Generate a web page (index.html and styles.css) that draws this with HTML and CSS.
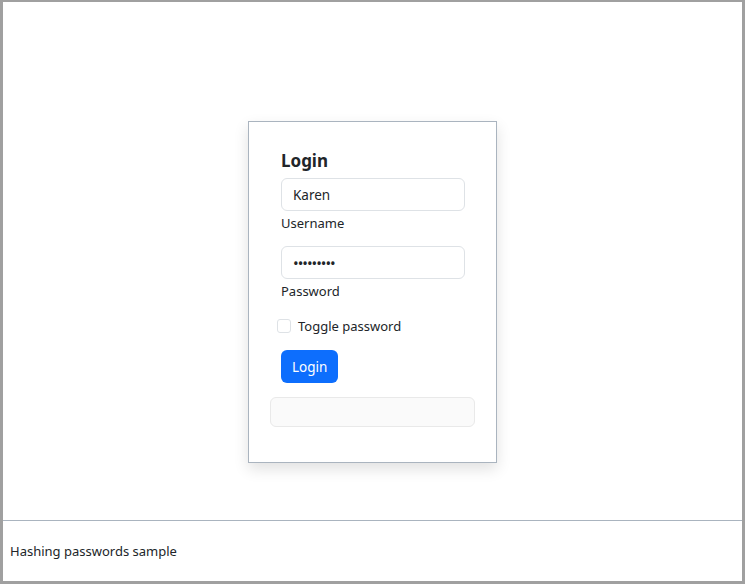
FILE: index.html
```html
<!DOCTYPE html>
<html>
<head>
<meta charset="utf-8">
<link rel="stylesheet" href="styles.css">
</head>
<body>
<div class="frame">
  <main class="main">
    <div class="card">
      <form class="form">
        <h3 class="title">Login</h3>
        <input class="control" type="text" value="Karen">
        <label class="label">Username</label>
        <input class="control control-2" type="password" value="secretpw1">
        <label class="label">Password</label>
        <div class="check">
          <span class="box"></span>
          <span class="check-label">Toggle password</span>
        </div>
        <button type="button" class="btn">Login</button>
      </form>
      <div class="message"></div>
    </div>
  </main>
  <footer class="footer">Hashing passwords sample</footer>
</div>
</body>
</html>
```
FILE: styles.css
```css
html, body {
  margin: 0;
  padding: 0;
  background: #ffffff;
}
body {
  font-family: "Noto Sans", "Open Sans", sans-serif;
  font-size: 13px;
  color: #212529;
}
.frame {
  box-sizing: border-box;
  width: 745px;
  height: 584px;
  border: 3px solid #a0a0a0;
  border-top-width: 2px;
  display: flex;
  flex-direction: column;
}
.main {
  height: 518px;
  flex: none;
  display: flex;
  justify-content: center;
  align-items: flex-start;
  border-bottom: 1px solid #aab4bf;
}
.card {
  box-sizing: border-box;
  width: 249px;
  height: 342px;
  margin-top: 119px;
  border: 1px solid #aab4bf;
  background: #fff;
  box-shadow: 0 6px 14px rgba(0,0,0,0.12);
  padding: 24px 21px 0 21px;
}
.form {
  display: flex;
  flex-direction: column;
  align-items: flex-start;
  padding: 0 11px;
}
.title {
  margin: 0;
  font-size: 17px;
  font-weight: 700;
  line-height: 30px;
  color: #212529;
}
.control {
  box-sizing: border-box;
  width: 184px;
  height: 33px;
  margin: 2px 0 0 0;
  padding: 0 11px;
  border: 1px solid #dee2e6;
  border-radius: 6px;
  font-family: inherit;
  font-size: 13.5px;
  color: #212529;
  background: #fff;
  outline: none;
}
.control-2 {
  margin-top: 12px;
  font-size: 15px;
  letter-spacing: -1px;
}
.label {
  line-height: 22px;
  margin-top: 1px;
}
.check {
  display: flex;
  align-items: center;
  margin: 13px 0 0 -4px;
  height: 22px;
}
.box {
  box-sizing: border-box;
  width: 14px;
  height: 14px;
  border: 1px solid #dee2e6;
  border-radius: 3px;
  background: #fff;
  margin-right: 7px;
}
.btn {
  margin-top: 13px;
  height: 33px;
  padding: 0 11px;
  border: none;
  border-radius: 6px;
  background: #0d6efd;
  color: #fff;
  font-family: inherit;
  font-size: 13.5px;
  cursor: pointer;
}
.message {
  box-sizing: border-box;
  margin-top: 14px;
  height: 30px;
  width: 205px;
  background: #fafafa;
  border: 1px solid #e9e9e9;
  border-radius: 6px;
}
.footer {
  padding: 21px 0 0 7px;
  font-size: 13px;
  color: #212529;
}
```
